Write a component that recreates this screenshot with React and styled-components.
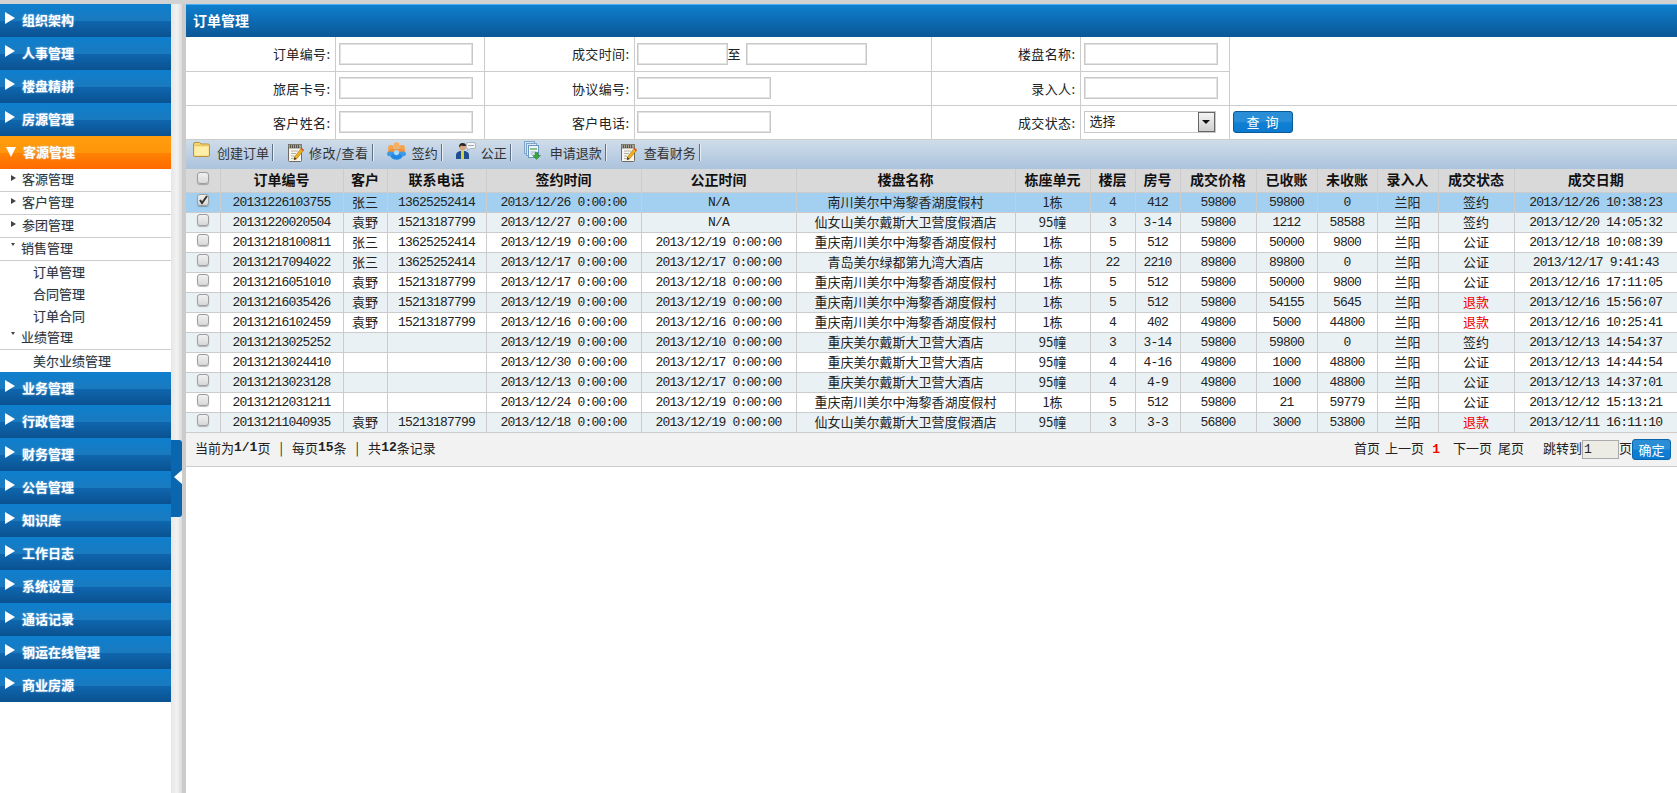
import React from "react";
import styled, { createGlobalStyle } from "styled-components";

const GlobalStyle = createGlobalStyle`
    html, body {
        margin: 0;
        padding: 0;
        height: 100%;
        background: #fff;
        overflow: hidden;
    }
    body {
        font-family: "Noto Sans CJK SC", "Liberation Sans", sans-serif;
        font-size: 13px;
        color: #222;
    }
`;

const MONO = `"Liberation Mono", "Noto Sans CJK SC", monospace`;

const Page = styled.div`
    display: grid;
    grid-template-columns: 171px 15px 1fr;
    width: 1677px;
    height: 793px;
    border-top: 4px solid #d2d2d2;
    box-sizing: border-box;
    overflow: hidden;
`;

/* ---------- sidebar ---------- */
const Side = styled.aside`
    display: flex;
    flex-direction: column;
    min-width: 0;
`;

const MenuHead = styled.div`
    display: flex;
    align-items: center;
    height: 33px;
    flex: none;
    padding: 0 0 2px 5px;
    box-sizing: border-box;
    color: #fff;
    font-weight: bold;
    text-shadow: 0 0 2px rgba(190, 225, 255, 0.75);
    background: ${(p) =>
        p.$active
            ? "linear-gradient(#ff9d0e 0, #ff960a 50%, #ff8204 52%, #ff6a00 100%)"
            : "linear-gradient(#0e7fce 0, #1a7abf 50%, #0f66ae 52%, #0a5291 100%)"};
`;

const HeadArrow = styled.i`
    width: 0;
    height: 0;
    margin-right: 7px;
    margin-top: -3px;
    border-style: solid;
    border-color: transparent transparent transparent #fff;
    border-width: 6px 0 6px 10px;
`;

const HeadArrowDown = styled.i`
    width: 0;
    height: 0;
    margin: 0 7px 0 1px;
    border-style: solid;
    border-color: #fff transparent transparent transparent;
    border-width: 10px 5px 0 5px;
`;

const SubItem = styled.div`
    display: flex;
    align-items: center;
    height: 23px;
    flex: none;
    padding: 0 0 3px 11px;
    box-sizing: border-box;
    border-bottom: 1px solid #ccc;
    color: #333;
    text-shadow: 0 0 1px rgba(120, 170, 220, 0.5);
`;

const SubArrow = styled.i`
    width: 0;
    height: 0;
    margin-right: 6px;
    margin-top: -1px;
    border-style: solid;
    border-color: transparent transparent transparent #444;
    border-width: 3.5px 0 3.5px 5px;
`;

const SubArrowDown = styled.i`
    width: 0;
    height: 0;
    margin-right: 6px;
    margin-top: -6px;
    border-style: solid;
    border-color: #444 transparent transparent transparent;
    border-width: 3px 2.5px 0 2.5px;
`;

const Leaf = styled.div`
    display: flex;
    align-items: center;
    height: 22px;
    flex: none;
    padding: 0 0 2px 33px;
    box-sizing: border-box;
    color: #333;
    text-shadow: 0 0 1px rgba(90, 170, 240, 0.6);
`;

/* ---------- splitter ---------- */
const Splitter = styled.div`
    position: relative;
    background: linear-gradient(90deg, #e6e6e6 0, #f2f2f2 40%, #dadada 73%, #cbcbcb 73%, #cbcbcb 100%);
`;

const Collapse = styled.div`
    position: absolute;
    top: 436px;
    left: 0;
    width: 11px;
    height: 77px;
    background: #0b66b0;
    border-radius: 0 3px 3px 0;
    &::after {
        content: "";
        position: absolute;
        top: 30px;
        left: 3px;
        border-style: solid;
        border-color: transparent #fff transparent transparent;
        border-width: 7px 8px 7px 0;
    }
`;

/* ---------- main ---------- */
const Main = styled.main`
    min-width: 0;
    display: flex;
    flex-direction: column;
`;

const TitleBar = styled.div`
    height: 33px;
    flex: none;
    display: flex;
    align-items: center;
    padding: 0 0 2px 7px;
    box-sizing: border-box;
    border-top: 1px solid #49aef0;
    color: #fff;
    font-size: 14px;
    font-weight: bold;
    background: linear-gradient(#0e7fce, #0b5796);
`;

const FormTable = styled.table`
    width: 1491px;
    table-layout: fixed;
    border-collapse: collapse;
    flex: none;
    td {
        height: 34px;
        padding: 0;
        box-sizing: border-box;
        border-right: 1px solid #ccc;
        border-bottom: 1px solid #ccc;
    }
    td.blank {
        border-right: 0;
    }
`;

const Label = styled.td`
    text-align: right;
    padding-right: 4px !important;
    letter-spacing: 0.4px;
`;

const Field = styled.td`
    padding-left: ${(p) => p.$pad ?? 3}px !important;
    white-space: nowrap;
`;

const Input = styled.input`
    display: inline-block;
    vertical-align: middle;
    width: ${(p) => p.$w || 134}px;
    height: 22px;
    padding: 0 2px;
    box-sizing: border-box;
    border: 1px solid #c8c8c8;
    box-shadow: inset 0 0 0 1px #e2e2e2;
    background: #fff;
    outline: 0;
`;

const To = styled.span`
    display: inline-block;
    width: 18px;
    vertical-align: middle;
`;

const SelectBox = styled.div`
    display: flex;
    align-items: center;
    justify-content: space-between;
    width: 132px;
    height: 22px;
    padding: 0 0 0 5px;
    box-sizing: border-box;
    border: 1px solid #c8c8c8;
    line-height: 18px;
`;

const SelectText = styled.span`
    margin-top: -2px;
`;

const SelectArrow = styled.span`
    display: flex;
    align-items: center;
    justify-content: center;
    width: 17px;
    height: 20px;
    box-sizing: border-box;
    border: 1px solid #666;
    background: linear-gradient(#f4f4f4, #cfcfcf);
    &::after {
        content: "";
        border-style: solid;
        border-color: #111 transparent transparent transparent;
        border-width: 4px 4px 0 4px;
    }
`;

const QueryBtn = styled.button`
    display: block;
    width: 60px;
    height: 22px;
    margin-left: 3px;
    padding: 0 0 2px;
    color: #fff;
    font: inherit;
    word-spacing: 3px;
    border: 1px solid #0a5a96;
    border-radius: 3px;
    background: linear-gradient(#2a8ed6 0, #2a8ed6 45%, #0f7fd4 55%, #0c7ad0 100%);
`;

const Toolbar = styled.div`
    display: flex;
    align-items: center;
    height: 29px;
    flex: none;
    padding: 0 0 3px 7px;
    box-sizing: border-box;
    color: #333;
    background: linear-gradient(#cfdcea, #abc3dc);
`;

const ToolItem = styled.div`
    display: flex;
    align-items: center;
    margin-left: ${(p) => p.$before}px;
    gap: ${(p) => p.$gap}px;
`;

const ToolIcon = styled.svg`
    display: block;
    flex: none;
    margin-top: ${(p) => -(p.$up || 0) * 2}px;
`;

const ToolLabel = styled.span`
    line-height: 17px;
    padding-right: ${(p) => p.$pad ?? 3}px;
    letter-spacing: ${(p) => p.$track ?? 0}px;
    border-right: 1px solid #5f7184;
    box-shadow: 1px 0 0 #e8eef5;
`;

const Grid = styled.table`
    width: 1491px;
    table-layout: fixed;
    border-collapse: collapse;
    flex: none;
    th, td {
        padding: 0;
        text-align: center;
        white-space: nowrap;
        overflow: hidden;
        border: 1px solid #ccc;
        box-sizing: border-box;
    }
    th {
        height: 24px;
        padding-bottom: 2px;
        background: #d9d9d9;
        color: #111;
        font-size: 14px;
        font-weight: bold;
        border-top: 0;
    }
    th:first-child, td:first-child {
        border-left: 0;
    }
    th:last-child, td:last-child {
        border-right: 0;
    }
`;

const Row = styled.tr`
    height: 20px;
    background: ${(p) => (p.$selected ? "#a3d0f0" : p.$striped ? "#e9f1f4" : "#fff")};
`;

const Cell = styled.td`
    height: 20px;
    color: ${(p) => (p.$red ? "#f00000" : "#222")};
    font-family: ${(p) => (p.$mono ? MONO : "inherit")};
    letter-spacing: ${(p) => (p.$mono ? "-0.8px" : "0")};
    line-height: 15px;
    padding-bottom: ${(p) => (p.$mono ? "1px" : "3px")} !important;
`;

const Check = styled.span`
    display: block;
    position: relative;
    width: 12px;
    height: 12px;
    margin: -2px auto 0;
    box-sizing: border-box;
    border: 1px solid #9d9d9d;
    border-radius: 3px;
    background: linear-gradient(#f0f0f0, #d8d8d8);
    box-shadow: 0 1px 1px rgba(0, 0, 0, 0.25);
    svg {
        position: absolute;
        top: 0;
        left: 0;
    }
`;

const Pager = styled.div`
    display: flex;
    align-items: center;
    justify-content: space-between;
    height: 34px;
    flex: none;
    padding: 0 6px 4px 9px;
    box-sizing: border-box;
    background: #f2f2f2;
    border-bottom: 1px solid #ccc;
`;

const PagerGroup = styled.div`
    display: flex;
    align-items: center;
    white-space: pre;
`;

const Sep = styled.span`
    margin: 0 9px;
`;

const Strong = styled.b`
    font-family: ${MONO};
    color: ${(p) => p.$color || "inherit"};
`;

const PagerLink = styled.span`
    margin-left: ${(p) => p.$before || 0}px;
`;

const PageInput = styled.input`
    width: 37px;
    height: 19px;
    margin-top: 4px;
    padding: 0 1px;
    box-sizing: border-box;
    font-family: ${MONO};
    font-size: 13px;
    letter-spacing: -0.8px;
    color: #222;
    background: #ecebe4;
    border: 1px solid #aaa;
    outline: 0;
`;

const GoBtn = styled.button`
    width: 39px;
    height: 21px;
    margin-top: 4px;
    padding: 0 0 2px;
    color: #fff;
    font: inherit;
    border: 1px solid #0a66ab;
    border-radius: 3px;
    background: linear-gradient(#2a8ed6 0, #2a8ed6 45%, #0f7fd4 55%, #0c7ad0 100%);
`;

/* ---------- toolbar icons ---------- */
const FolderIcon = () => (
    <ToolIcon $up={3} width="17" height="15" viewBox="0 0 17 15">
        <path d="M.5 2 Q.5 .5 2 .5 H6.5 L8 2 H15 Q16.5 2 16.5 3.5 V13 Q16.5 14.5 15 14.5 H2 Q.5 14.5 .5 13 Z" fill="#f5d878" stroke="#b8923c" />
        <path d="M1.5 4.5 H15.5 V13.5 H1.5 Z" fill="#fdeea8" />
        <path d="M1.5 3.2 H15.5" stroke="#e2c05a" />
    </ToolIcon>
);

const NoteIcon = () => (
    <ToolIcon $up={0} width="16" height="18" viewBox="0 0 16 18">
        <rect x=".5" y="2" width="13" height="15.5" rx="1" fill="#f7f6ee" stroke="#6f6b60" />
        <rect x=".5" y=".5" width="13" height="3.5" fill="#a9a699" stroke="#6f6b60" strokeWidth=".8" />
        <path d="M2.5 1v3M4.5 1v3M6.5 1v3M8.5 1v3M10.5 1v3" stroke="#44423c" strokeWidth=".8" />
        <path d="M3 7h7M3 9.5h5M3 12h3.5M3 14.5h2.5" stroke="#b4b2a8" />
        <path d="M6.5 13 L13.5 4 L15.8 6 L8.5 15 L6 15.8 Z" fill="#f2b01c" stroke="#a8700f" strokeWidth=".6" />
        <path d="M13.5 4 L15.8 6 L15 7 L12.7 5 Z" fill="#d8483a" />
        <path d="M6 15.8 L6.5 13 L8.5 15 Z" fill="#33302a" />
    </ToolIcon>
);

const PeopleIcon = () => (
    <ToolIcon $up={2} width="19" height="18" viewBox="0 0 19 18">
        <circle cx="4" cy="6" r="3" fill="#f5a44c" />
        <circle cx="15" cy="6" r="3" fill="#f5a44c" />
        <circle cx="9.5" cy="3.2" r="3" fill="#f8b060" />
        <ellipse cx="9.5" cy="9" rx="8.8" ry="2.6" fill="#f2933a" />
        <ellipse cx="3.8" cy="12" rx="3.8" ry="2.4" fill="#3f9ae6" />
        <ellipse cx="15.2" cy="12" rx="3.8" ry="2.4" fill="#3f9ae6" />
        <ellipse cx="9.5" cy="14.5" rx="5.6" ry="3.2" fill="#2088e2" />
        <circle cx="9.5" cy="10.6" r="2.6" fill="#a8d8fa" />
    </ToolIcon>
);

const AgentIcon = () => (
    <ToolIcon $up={2} width="20" height="17" viewBox="0 0 20 17">
        <path d="M0 17 V13 Q0 10 4 9 H9 Q13 10 13 13 V17 Z" fill="#1f4f92" />
        <path d="M5 9 H8 L8 17 H5 Z" fill="#d8d23a" />
        <circle cx="6.5" cy="5" r="3.4" fill="#d9a67c" />
        <path d="M3 5 Q3 1 6.5 1 Q10 1 10 4 Q7 4 5 3.5 Q4 5 3 5Z" fill="#2a2622" />
        <path d="M12 .5 H18 Q19.5 .5 19.5 2 V5 Q19.5 6.5 18 6.5 H14 L11.5 8.5 L12 6.5 Q10.5 6.5 10.5 5 V2 Q10.5 .5 12 .5Z" fill="#f4f5f6" stroke="#8a97a5" strokeWidth=".6" />
        <path d="M12.5 3.5h1M14.5 3.5h1M16.5 3.5h1" stroke="#556" />
    </ToolIcon>
);

const DocsIcon = () => (
    <ToolIcon $up={2} width="17" height="19" viewBox="0 0 17 19">
        <rect x=".5" y=".5" width="10" height="12" fill="#cfe0f2" stroke="#7fa5cc" />
        <rect x="2.5" y="2.5" width="10" height="12" fill="#dbe8f6" stroke="#7fa5cc" />
        <rect x="4.5" y="4.5" width="10" height="12" fill="#eef4fb" stroke="#6b96c2" />
        <path d="M6 7h7V9H6z" fill="#8fc08f" />
        <path d="M6.5 11h6M6.5 13h3" stroke="#94b0cc" />
        <path d="M11 11.5h3v3h2.5l-4 4-4-4H11z" fill="#3ba53b" stroke="#237a23" strokeWidth=".5" />
    </ToolIcon>
);

const TOOLS = [
    { icon: <FolderIcon />, label: "创建订单", before: 0, gap: 7 },
    { icon: <NoteIcon />, label: "修改/查看", before: 15, gap: 5, track: 0.5 },
    { icon: <PeopleIcon />, label: "签约", before: 14, gap: 6 },
    { icon: <AgentIcon />, label: "公正", before: 14, gap: 5 },
    { icon: <DocsIcon />, label: "申请退款", before: 13, gap: 9 },
    { icon: <NoteIcon />, label: "查看财务", before: 15, gap: 7 },
];

/* ---------- data ---------- */
const NANCHUAN = "重庆南川美尔中海黎香湖度假村";
const DAIWEI = "重庆美尔戴斯大卫营大酒店";
const XIANNV = "仙女山美尔戴斯大卫营度假酒店";
const ZS = ["张三", "13625252414"];
const YY = ["袁野", "15213187799"];
const NONE = ["", ""];

const ROWS = [
    ["20131226103755", ...ZS, "2013/12/26 0:00:00", "N/A", "南川美尔中海黎香湖度假村", "1栋", "4", "412", "59800", "59800", "0", "签约", "2013/12/26 10:38:23"],
    ["20131220020504", ...YY, "2013/12/27 0:00:00", "N/A", XIANNV, "95幢", "3", "3-14", "59800", "1212", "58588", "签约", "2013/12/20 14:05:32"],
    ["20131218100811", ...ZS, "2013/12/19 0:00:00", "2013/12/19 0:00:00", NANCHUAN, "1栋", "5", "512", "59800", "50000", "9800", "公证", "2013/12/18 10:08:39"],
    ["20131217094022", ...ZS, "2013/12/17 0:00:00", "2013/12/17 0:00:00", "青岛美尔绿都第九湾大酒店", "1栋", "22", "2210", "89800", "89800", "0", "公证", "2013/12/17 9:41:43"],
    ["20131216051010", ...YY, "2013/12/17 0:00:00", "2013/12/18 0:00:00", NANCHUAN, "1栋", "5", "512", "59800", "50000", "9800", "公证", "2013/12/16 17:11:05"],
    ["20131216035426", ...YY, "2013/12/19 0:00:00", "2013/12/19 0:00:00", NANCHUAN, "1栋", "5", "512", "59800", "54155", "5645", "退款", "2013/12/16 15:56:07"],
    ["20131216102459", ...YY, "2013/12/16 0:00:00", "2013/12/16 0:00:00", NANCHUAN, "1栋", "4", "402", "49800", "5000", "44800", "退款", "2013/12/16 10:25:41"],
    ["20131213025252", ...NONE, "2013/12/19 0:00:00", "2013/12/10 0:00:00", DAIWEI, "95幢", "3", "3-14", "59800", "59800", "0", "签约", "2013/12/13 14:54:37"],
    ["20131213024410", ...NONE, "2013/12/30 0:00:00", "2013/12/17 0:00:00", DAIWEI, "95幢", "4", "4-16", "49800", "1000", "48800", "公证", "2013/12/13 14:44:54"],
    ["20131213023128", ...NONE, "2013/12/13 0:00:00", "2013/12/17 0:00:00", DAIWEI, "95幢", "4", "4-9", "49800", "1000", "48800", "公证", "2013/12/13 14:37:01"],
    ["20131212031211", ...NONE, "2013/12/24 0:00:00", "2013/12/19 0:00:00", NANCHUAN, "1栋", "5", "512", "59800", "21", "59779", "公证", "2013/12/12 15:13:21"],
    ["20131211040935", ...YY, "2013/12/18 0:00:00", "2013/12/19 0:00:00", XIANNV, "95幢", "3", "3-3", "56800", "3000", "53800", "退款", "2013/12/11 16:11:10"],
];

const HEADERS = ["订单编号", "客户", "联系电话", "签约时间", "公正时间", "楼盘名称", "栋座单元", "楼层", "房号", "成交价格", "已收账", "未收账", "录入人", "成交状态", "成交日期"];
const WIDTHS = [34, 123, 44, 99, 155, 155, 219, 75, 45, 45, 76, 61, 60, 61, 76, 163];
const TEXT_COLS = [1, 5, 6, 12, 13];

const MENU_TOP = ["组织架构", "人事管理", "楼盘精耕", "房源管理"];
const MENU_BOTTOM = ["业务管理", "行政管理", "财务管理", "公告管理", "知识库", "工作日志", "系统设置", "通话记录", "钢运在线管理", "商业房源"];

const Sidebar = () => (
    <Side>
        {MENU_TOP.map((m) => (
            <MenuHead key={m}><HeadArrow />{m}</MenuHead>
        ))}
        <MenuHead $active><HeadArrowDown />客源管理</MenuHead>
        <SubItem><SubArrow />客源管理</SubItem>
        <SubItem><SubArrow />客户管理</SubItem>
        <SubItem><SubArrow />参团管理</SubItem>
        <SubItem><SubArrowDown />销售管理</SubItem>
        <Leaf>订单管理</Leaf>
        <Leaf>合同管理</Leaf>
        <Leaf>订单合同</Leaf>
        <SubItem><SubArrowDown />业绩管理</SubItem>
        <Leaf>美尔业绩管理</Leaf>
        {MENU_BOTTOM.map((m) => (
            <MenuHead key={m}><HeadArrow />{m}</MenuHead>
        ))}
    </Side>
);

const SearchForm = () => (
    <FormTable>
        <colgroup>
            <col width="149" /><col width="149" /><col width="150" /><col width="297" /><col width="149" /><col width="149" /><col />
        </colgroup>
        <tbody>
            <tr>
                <Label>订单编号:</Label>
                <Field><Input /></Field>
                <Label>成交时间:</Label>
                <Field $pad={2}><Input $w={91} /><To>至</To><Input $w={121} /></Field>
                <Label>楼盘名称:</Label>
                <Field><Input /></Field>
                <td className="blank" rowSpan={2} />
            </tr>
            <tr>
                <Label>旅居卡号:</Label>
                <Field><Input /></Field>
                <Label>协议编号:</Label>
                <Field $pad={2}><Input /></Field>
                <Label>录入人:</Label>
                <Field><Input /></Field>
            </tr>
            <tr>
                <Label>客户姓名:</Label>
                <Field><Input /></Field>
                <Label>客户电话:</Label>
                <Field $pad={2}><Input /></Field>
                <Label>成交状态:</Label>
                <Field>
                    <SelectBox><SelectText>选择</SelectText><SelectArrow /></SelectBox>
                </Field>
                <td className="blank"><QueryBtn>查 询</QueryBtn></td>
            </tr>
        </tbody>
    </FormTable>
);

const OrderGrid = () => (
    <Grid>
        <colgroup>
            {WIDTHS.map((w, i) => <col key={i} width={w} />)}
        </colgroup>
        <thead>
            <tr>
                <th><Check /></th>
                {HEADERS.map((h) => <th key={h}>{h}</th>)}
            </tr>
        </thead>
        <tbody>
            {ROWS.map((r, i) => {
                // 录入人 is the same everywhere, so it is left out of the rows
                const cells = [...r.slice(0, 12), "兰阳", ...r.slice(12)];
                return (
                    <Row key={r[0]} $selected={i === 0} $striped={i % 2 === 1}>
                        <Cell>
                            <Check>
                                {i === 0 && (
                                    <svg width="10" height="10" viewBox="0 0 10 10">
                                        <path d="M2 5 L4 8 L9 1" fill="none" stroke="#333" strokeWidth="2" />
                                    </svg>
                                )}
                            </Check>
                        </Cell>
                        {cells.map((c, j) => (
                            <Cell key={j} $mono={!TEXT_COLS.includes(j)} $red={c === "退款"}>{c}</Cell>
                        ))}
                    </Row>
                );
            })}
        </tbody>
    </Grid>
);

const PagerBar = () => (
    <Pager>
        <PagerGroup>
            当前为<Strong>1/1</Strong>页<Sep>|</Sep>每页<Strong>15</Strong>条<Sep>|</Sep>共<Strong>12</Strong>条记录
        </PagerGroup>
        <PagerGroup>
            <PagerLink>首页</PagerLink>
            <PagerLink $before={5}>上一页</PagerLink>
            <PagerLink $before={8}><Strong $color="#f00">1</Strong></PagerLink>
            <PagerLink $before={13}>下一页</PagerLink>
            <PagerLink $before={6}>尾页</PagerLink>
            <PagerLink $before={19}>跳转到</PagerLink>
            <PageInput defaultValue="1" />
            页
            <GoBtn>确定</GoBtn>
        </PagerGroup>
    </Pager>
);

export default function App() {
    return (
        <Page>
            <GlobalStyle />
            <Sidebar />
            <Splitter><Collapse /></Splitter>
            <Main>
                <TitleBar>订单管理</TitleBar>
                <SearchForm />
                <Toolbar>
                    {TOOLS.map((t) => (
                        <ToolItem key={t.label} $before={t.before} $gap={t.gap}>
                            {t.icon}
                            <ToolLabel $track={t.track}>{t.label}</ToolLabel>
                        </ToolItem>
                    ))}
                </Toolbar>
                <OrderGrid />
                <PagerBar />
            </Main>
        </Page>
    );
}
